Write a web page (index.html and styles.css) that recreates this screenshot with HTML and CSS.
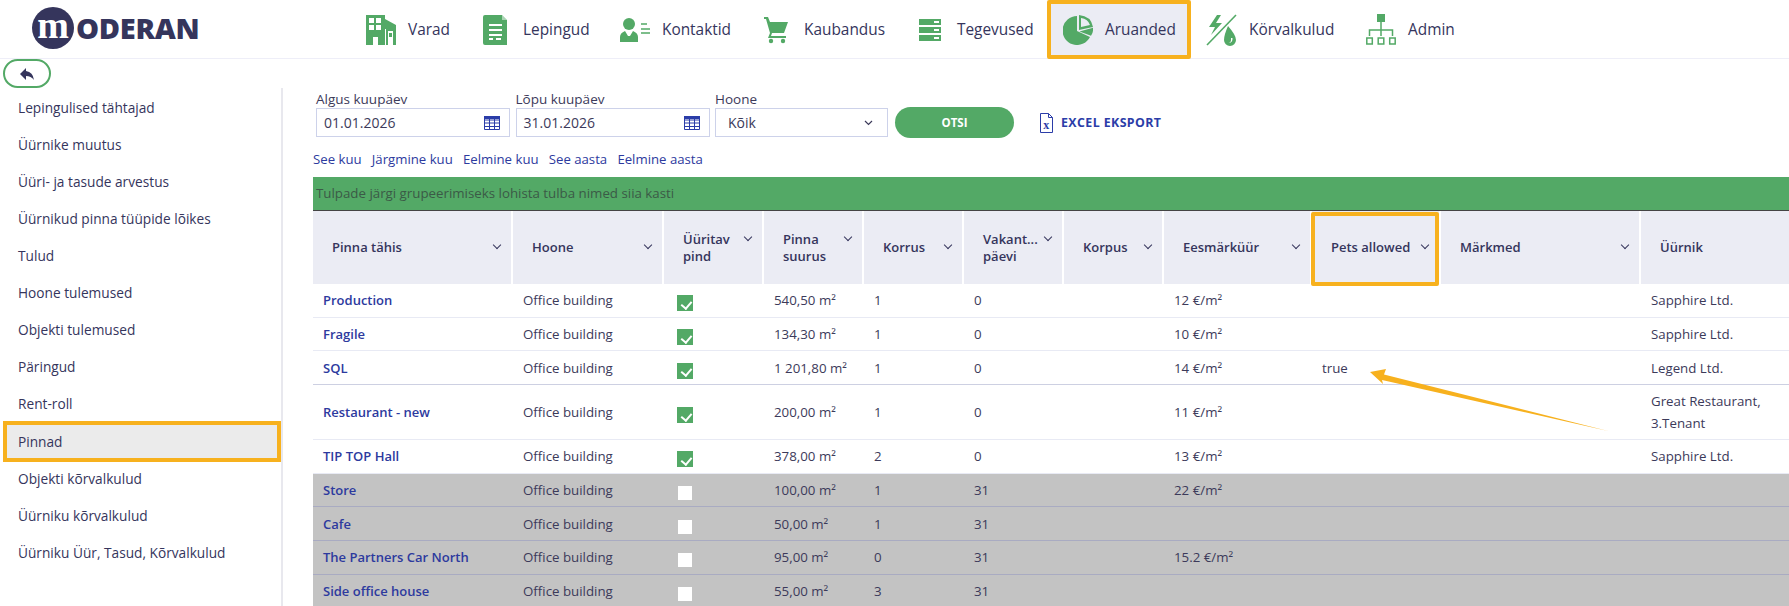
FILE: index.html
```html
<!DOCTYPE html>
<html lang="et">
<head>
<meta charset="utf-8">
<title>Moderan</title>
<link rel="stylesheet" href="styles.css">
</head>
<body>
<header class="topbar">
  <div class="logo">
    <span class="logo-mark">m</span><span class="logo-text">ODERAN</span>
  </div>
  <nav class="nav">
    <a class="nav-item">
      <svg class="ic" width="30" height="30" viewBox="0 0 30 30"><path fill="#53a966" fill-rule="evenodd" d="M0 0h19v4l11 6v20H20V14h-1v16h-7v-8H7v8H0zM3 3v5h5V3zm7 0v5h5V3zM3 10v5h5v-5zm7 0v5h5v-5zm12 6v14h5V16zm1 2h3v4h-3z"/></svg>
      <span>Varad</span>
    </a>
    <a class="nav-item nav-wide">
      <svg class="ic" width="24" height="30" viewBox="0 0 24 30"><path fill="#53a966" fill-rule="evenodd" d="M2 0h17l5 5v25H2q-2 0-2-2V2q0-2 2-2zm4 9v2h13V9zm0 5v2h13v-2zm0 5v2h13v-2zm0 4v2h4v-2zm7 0v2h5v-2z"/><path fill="#fff" d="M19 0v5h5z" opacity=".5"/></svg>
      <span>Lepingud</span>
    </a>
    <a class="nav-item">
      <svg class="ic" width="30" height="26" viewBox="0 0 30 26"><circle cx="9" cy="7" r="6" fill="#53a966"/><path fill="#53a966" d="M0 25v-5q0-4 5-6l3 5h2l3-5q5 2 5 6v5z"/><path stroke="#53a966" stroke-width="1.6" d="M21 7h6M21 12h9M21 16h9"/></svg>
      <span>Kontaktid</span>
    </a>
    <a class="nav-item nav-wide">
      <svg class="ic" width="24" height="28" viewBox="0 0 24 28"><path fill="#53a966" d="M0 1h4l2 5h18l-4 11H8l-1 3h15v2H4l2-5L2 3H0z"/><circle cx="7" cy="25" r="2.2" fill="#53a966"/><circle cx="19" cy="25" r="2.2" fill="#53a966"/></svg>
      <span>Kaubandus</span>
    </a>
    <a class="nav-item nav-wide">
      <svg class="ic" width="22" height="22" viewBox="0 0 22 22"><path fill="#53a966" fill-rule="evenodd" d="M0 0h22v6H0zm15 2v2h5V2zM0 8h22v6H0zm15 2v2h5v-2zM0 16h22v6H0zm15 2v2h5v-2z"/></svg>
      <span>Tegevused</span>
    </a>
    <a class="nav-item nav-active">
      <svg class="ic" width="30" height="30" viewBox="0 0 30 30"><path fill="#53a966" d="M14 1A14.500 14.500 0 1 0 27 22L14 16z"/><path fill="#53a966" fill-rule="evenodd" d="M16 0q12 1 14 12L16 15zm2 3v9l9-2q-2-6-9-7z"/><path fill="#53a966" d="M16.500 16.500L30 12.800q.5 4.500-2 8z"/></svg>
      <span>Aruanded</span>
    </a>
    <a class="nav-item">
      <svg class="ic" width="31" height="32" viewBox="0 0 31 32"><path stroke="#53a966" stroke-width="1.600" d="M1 31L30 1"/><path fill="#53a966" d="M11 1L3 13h6l-4 8 11-12h-6l5-8z"/><path fill="#53a966" fill-rule="evenodd" d="M22 12q8 9 8 14a6 6 0 0 1-12 0q0-5 4-14zm3 12v2q0 2.500-3 3 5 0 4.500-5z"/></svg>
      <span>Körvalkulud</span>
    </a>
    <a class="nav-item">
      <svg class="ic" width="30" height="32" viewBox="0 0 30 32"><path fill="#53a966" d="M11 0h8v8h-8z"/><path fill="none" stroke="#53a966" stroke-width="1.500" d="M15 8v8M3.500 22v-6h23v6M15 16v6M.8 24h5.500v6H.8zM12.200 24h5.600v6h-5.600zM23.700 24h5.500v6h-5.500z"/></svg>
      <span>Admin</span>
    </a>
  </nav>
</header>

<button class="back" type="button" aria-label="Tagasi">
  <svg width="14" height="12" viewBox="0 0 14 12"><path fill="#35355c" d="M6 0v3q7 1 8 9-3-4-8-4v4L0 6z"/></svg>
</button>

<div class="layout">
  <aside class="side">
    <a class="side-item">Lepingulised tähtajad</a>
    <a class="side-item">Üürnike muutus</a>
    <a class="side-item">Üüri- ja tasude arvestus</a>
    <a class="side-item">Üürnikud pinna tüüpide lõikes</a>
    <a class="side-item">Tulud</a>
    <a class="side-item">Hoone tulemused</a>
    <a class="side-item">Objekti tulemused</a>
    <a class="side-item">Päringud</a>
    <a class="side-item">Rent-roll</a>
    <a class="side-item side-active">Pinnad</a>
    <a class="side-item">Objekti kõrvalkulud</a>
    <a class="side-item">Üürniku kõrvalkulud</a>
    <a class="side-item">Üürniku Üür, Tasud, Kõrvalkulud</a>
  </aside>

  <main class="main">
    <form class="filters">
      <div class="field">
        <label class="field-label">Algus kuupäev</label>
        <div class="input"><span>01.01.2026</span>
          <svg width="16" height="14" viewBox="0 0 16 14"><path fill="none" stroke="#2b3da8" d="M.5.500h15v13H.5zM.5 4h15M.5 7h15M.5 10.500h15M5.500 3v11M10.500 3v11"/><path fill="#2b3da8" d="M0 0h16v3H0z"/></svg>
        </div>
      </div>
      <div class="field">
        <label class="field-label">Lõpu kuupäev</label>
        <div class="input"><span>31.01.2026</span>
          <svg width="16" height="14" viewBox="0 0 16 14"><path fill="none" stroke="#2b3da8" d="M.5.500h15v13H.5zM.5 4h15M.5 7h15M.5 10.500h15M5.500 3v11M10.500 3v11"/><path fill="#2b3da8" d="M0 0h16v3H0z"/></svg>
        </div>
      </div>
      <div class="field">
        <label class="field-label">Hoone</label>
        <div class="input input-select"><span>Kõik</span>
          <svg width="9" height="6" viewBox="0 0 9 6"><path fill="none" stroke="#3c3a5a" stroke-width="1.200" d="M1 1l3.500 3.500L8 1"/></svg>
        </div>
      </div>
      <button class="search" type="button">OTSI</button>
      <a class="export">
        <svg width="13" height="20" viewBox="0 0 13 20"><path fill="none" stroke="#2b3da8" d="M.5.500h8l4 4v15H.5zM8.500.500v4h4"/><text x="6.500" y="16" text-anchor="middle" class="export-x">x</text></svg>
        <span>EXCEL EKSPORT</span>
      </a>
    </form>

    <div class="links">
      <a>See kuu</a><a>Järgmine kuu</a><a>Eelmine kuu</a><a>See aasta</a><a>Eelmine aasta</a>
    </div>

    <div class="group-bar">Tulpade järgi grupeerimiseks lohista tulba nimed siia kasti</div>

    <table class="grid">
      <colgroup>
        <col class="c200"><col class="c151"><col class="c100"><col class="c100"><col class="c100"><col class="c100"><col class="c100"><col class="c148"><col class="c129"><col class="c200"><col class="c200">
      </colgroup>
      <thead>
        <tr>
          <th><div class="th-in"><span>Pinna tähis</span><i class="chev"></i></div></th>
          <th><div class="th-in"><span>Hoone</span><i class="chev"></i></div></th>
          <th><div class="th-in"><span>Üüritav pind</span><i class="chev"></i></div></th>
          <th><div class="th-in"><span>Pinna suurus</span><i class="chev"></i></div></th>
          <th><div class="th-in"><span>Korrus</span><i class="chev"></i></div></th>
          <th><div class="th-in"><span>Vakant... päevi</span><i class="chev"></i></div></th>
          <th><div class="th-in"><span>Korpus</span><i class="chev"></i></div></th>
          <th><div class="th-in"><span>Eesmärküür</span><i class="chev"></i></div></th>
          <th class="th-mark"><div class="th-in"><span>Pets allowed</span><i class="chev"></i></div></th>
          <th><div class="th-in"><span>Märkmed</span><i class="chev"></i></div></th>
          <th><div class="th-in"><span>Üürnik</span><i class="chev"></i></div></th>
        </tr>
      </thead>
      <tbody>
        <tr>
          <td><a class="name">Production</a></td><td>Office building</td><td><i class="check on"></i></td><td>540,50 m²</td><td>1</td><td>0</td><td></td><td>12 €/m²</td><td></td><td></td><td>Sapphire Ltd.</td>
        </tr>
        <tr>
          <td><a class="name">Fragile</a></td><td>Office building</td><td><i class="check on"></i></td><td>134,30 m²</td><td>1</td><td>0</td><td></td><td>10 €/m²</td><td></td><td></td><td>Sapphire Ltd.</td>
        </tr>
        <tr class="row-strong">
          <td><a class="name">SQL</a></td><td>Office building</td><td><i class="check on"></i></td><td>1 201,80 m²</td><td>1</td><td>0</td><td></td><td>14 €/m²</td><td>true</td><td></td><td>Legend Ltd.</td>
        </tr>
        <tr>
          <td><a class="name">Restaurant - new</a></td><td>Office building</td><td><i class="check on"></i></td><td>200,00 m²</td><td>1</td><td>0</td><td></td><td>11 €/m²</td><td></td><td></td><td>Great Restaurant,<br>3.Tenant</td>
        </tr>
        <tr>
          <td><a class="name">TIP TOP Hall</a></td><td>Office building</td><td><i class="check on"></i></td><td>378,00 m²</td><td>2</td><td>0</td><td></td><td>13 €/m²</td><td></td><td></td><td>Sapphire Ltd.</td>
        </tr>
        <tr class="row-off">
          <td><a class="name">Store</a></td><td>Office building</td><td><i class="check"></i></td><td>100,00 m²</td><td>1</td><td>31</td><td></td><td>22 €/m²</td><td></td><td></td><td></td>
        </tr>
        <tr class="row-off">
          <td><a class="name">Cafe</a></td><td>Office building</td><td><i class="check"></i></td><td>50,00 m²</td><td>1</td><td>31</td><td></td><td></td><td></td><td></td><td></td>
        </tr>
        <tr class="row-off">
          <td><a class="name">The Partners Car North</a></td><td>Office building</td><td><i class="check"></i></td><td>95,00 m²</td><td>0</td><td>31</td><td></td><td>15.2 €/m²</td><td></td><td></td><td></td>
        </tr>
        <tr class="row-off">
          <td><a class="name">Side office house</a></td><td>Office building</td><td><i class="check"></i></td><td>55,00 m²</td><td>3</td><td>31</td><td></td><td></td><td></td><td></td><td></td>
        </tr>
      </tbody>
    </table>
  </main>
</div>

<svg class="callout" width="250" height="80" viewBox="0 0 250 80">
  <path fill="#f7b11e" d="M10 12L26 9l-2 5.500L248 71 22 20l1 4z"/>
</svg>
</body>
</html>
```

FILE: styles.css
```css
* { box-sizing: border-box; }
html, body { margin: 0; height: 100%; }
body {
  position: relative;
  overflow: hidden;
  background: #fff;
  color: #3c3a5a;
  font-family: "Open Sans", "Noto Sans", sans-serif;
  font-size: 13px;
}
a { color: inherit; text-decoration: none; }

.topbar {
  display: flex;
  height: 59px;
  border-bottom: 1px solid #eeeef8;
  padding-left: 32px;
}
.logo { display: flex; align-items: center; flex: none; width: 319px; height: 55px; }
.logo-mark {
  display: flex;
  align-items: center;
  justify-content: center;
  flex: none;
  width: 42px;
  height: 42px;
  border-radius: 50%;
  background: #35355c;
  color: #fff;
  font-family: "Liberation Serif", serif;
  font-weight: 700;
  font-size: 38px;
  line-height: 36px;
  padding-bottom: 6px;
}
.logo-text {
  margin-left: 2px;
  color: #35355c;
  font-weight: 800;
  font-size: 29px;
  line-height: 1;
  letter-spacing: -.3px;
}
.nav {
  display: grid;
  grid-template-columns: 117px 137px 144px 155px 143px 144px 160px 100px;
  height: 59px;
}
.nav-item {
  display: flex;
  align-items: center;
  gap: 12px;
  height: 59px;
  padding-left: 15px;
  color: #35355c;
  font-size: 15.400px;
  font-weight: 500;
}
.nav-wide { gap: 16px; }
.nav-active {
  background: #ebecf4;
  border: 4px solid #f7b11e;
  border-radius: 2px;
  padding-left: 12px;
}
.ic { flex: none; }

.back {
  display: flex;
  align-items: center;
  justify-content: center;
  width: 48px;
  height: 29px;
  margin-left: 3px;
  padding: 0;
  border: 2px solid #53a966;
  border-radius: 15px;
  background: #fff;
}

.layout { display: flex; }
.side {
  flex: none;
  width: 283px;
  height: 518px;
  padding-top: 1px;
  border-right: 2px solid #e8e8ee;
}
.side-item {
  display: flex;
  align-items: center;
  height: 37px;
  padding-left: 18px;
  font-size: 13.700px;
  font-weight: 500;
  color: #35355c;
}
.side-active {
  margin: 3px 4px 2px 7px;
  height: 33px;
  padding-left: 11px;
  background: #ebebeb;
  outline: 4px solid #f7b11e;
}

.main { flex: 1; min-width: 0; overflow: hidden; padding: 2px 0 0 30px; }
.filters { display: flex; align-items: flex-end; padding-left: 3px; }
.field { margin-right: 5.500px; }
.field-label { display: block; height: 18px; line-height: 18px; font-size: 13.500px; }
.input {
  display: flex;
  align-items: center;
  justify-content: space-between;
  width: 194px;
  height: 29px;
  padding: 0 9px 0 7px;
  border: 1px solid #cdd2ea;
  font-size: 14px;
}
.input-select { width: 173px; padding: 0 14px 0 12px; }
.search {
  width: 119px;
  height: 31px;
  margin: 0 0 -1px 1.500px;
  border: 0;
  border-radius: 16px;
  background: #53a966;
  color: #fff;
  font-family: inherit;
  font-size: 11.500px;
  font-weight: 700;
}
.export {
  display: flex;
  align-items: center;
  gap: 8px;
  margin-left: 26px;
  height: 29px;
  color: #2b3da8;
  font-size: 12.400px;
  font-weight: 700;
  letter-spacing: .4px;
}
.export-x { fill: #2b3da8; font-size: 12px; font-family: "Liberation Serif", serif; }

.links { display: flex; gap: 10.200px; height: 20px; margin-top: 12px; line-height: 20px; color: #2d3a9e; font-size: 13.200px; }

.group-bar {
  height: 34px;
  margin-top: 8px;
  padding-left: 3px;
  background: #53a966;
  border-bottom: 1px solid #444;
  color: #3b5a47;
  line-height: 33px;
  font-size: 13.300px;
}

.grid { table-layout: fixed; width: 1528px; border-collapse: separate; border-spacing: 0; }
.c100 { width: 100px; }
.c129 { width: 129px; }
.c148 { width: 148px; }
.c151 { width: 151px; }
.c200 { width: 200px; }

.grid th {
  height: 73px;
  padding: 0 9px 0 19px;
  background: #ebecf4;
  border-right: 2px solid #fff;
  text-align: left;
  font-size: 13px;
  font-weight: 600;
  line-height: 17px;
  color: #35355c;
}
.th-in { display: flex; justify-content: space-between; align-items: flex-start; gap: 6px; }
.chev {
  flex: none;
  width: 6px;
  height: 6px;
  margin: 3px 2px 0 0;
  border-right: 1.600px solid #35355c;
  border-bottom: 1.600px solid #35355c;
  transform: rotate(45deg);
}
.th-mark { position: relative; white-space: nowrap; }
.th-mark::after {
  content: "";
  position: absolute;
  top: 1px;
  right: 0;
  bottom: -2px;
  left: -1px;
  border: 4px solid #f7b11e;
  border-radius: 2px;
}

.grid td {
  height: 33.700px;
  padding: 5px 10px;
  border-bottom: 1px solid #e8eaf4;
  font-size: 13.300px;
  line-height: 22px;
  color: #3c3a5a;
  white-space: nowrap;
}
.name { color: #2d3a9e; font-size: 13px; font-weight: 600; }
.row-strong td { border-bottom-color: #cdd0e2; }
.row-off td { background: #c3c3c3; border-bottom-color: #a9abc2; }

.check {
  display: block;
  position: relative;
  top: 3px;
  width: 14px;
  height: 14px;
  margin-left: 4px;
  background: #fff;
}
.check.on { width: 16px; height: 16px; margin-left: 3px; background: #53a966; }
.check.on::after {
  content: "";
  position: absolute;
  left: 5.500px;
  top: 3.500px;
  width: 5px;
  height: 8px;
  border-right: 2px solid #fff;
  border-bottom: 2px solid #fff;
  transform: rotate(40deg);
}

.callout { position: absolute; left: 1360px; top: 360px; }
```
